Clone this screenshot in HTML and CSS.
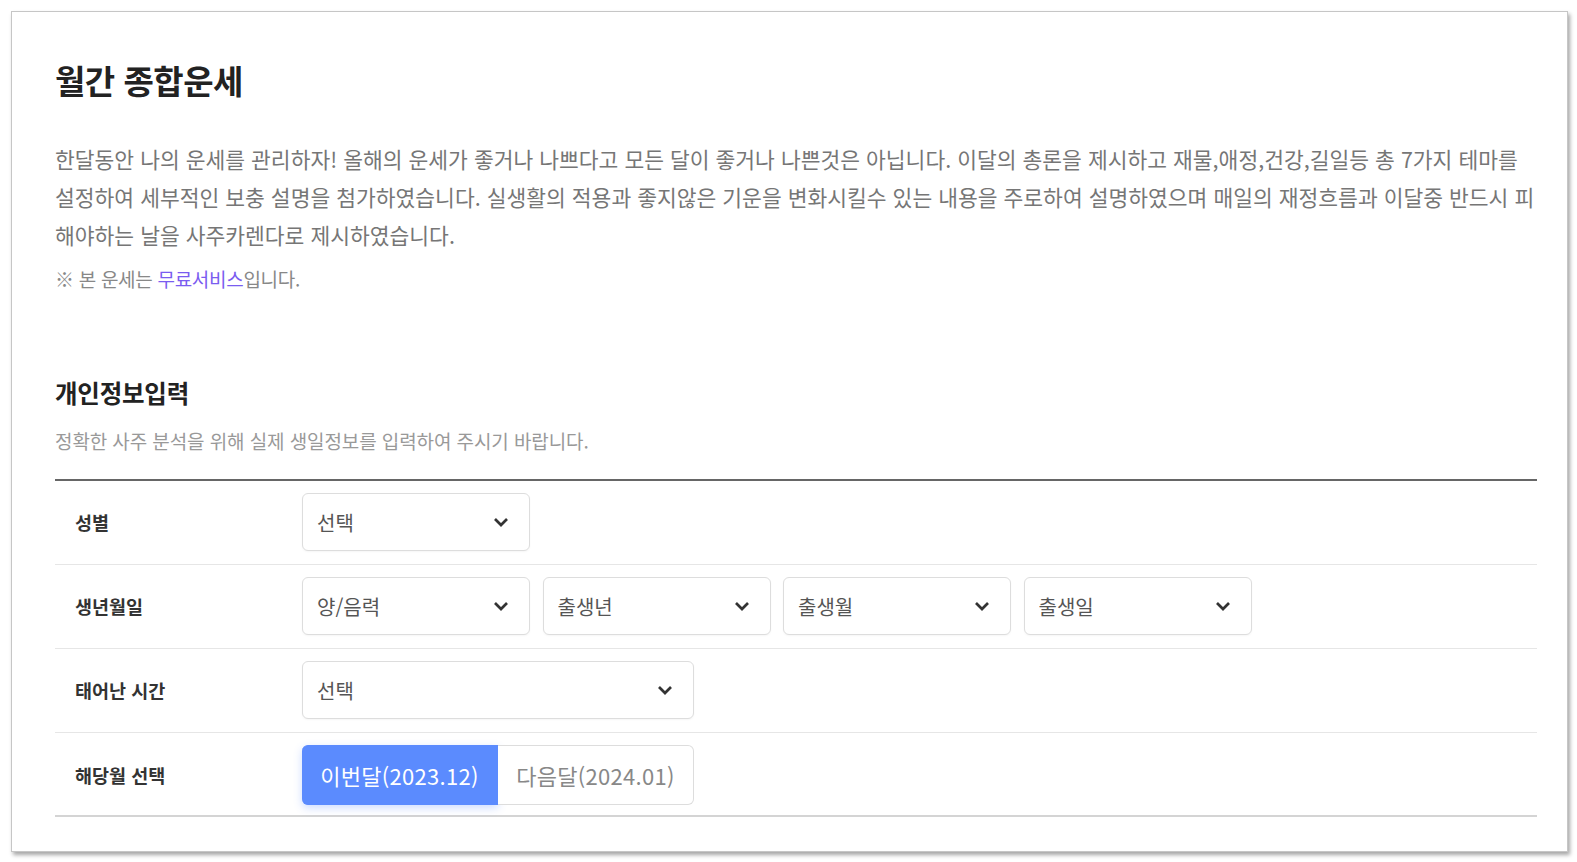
FILE: index.html
```html
<!DOCTYPE html>
<html lang="ko">
<head>
    <meta charset="UTF-8">
    <meta name="viewport" content="width=device-width, initial-scale=1.0">
    <title>월간 종합운세</title>
    <link rel="stylesheet" href="styles.css">
</head>
<body>
    <div class="window">
        <h1 class="title">월간 종합운세</h1>
        <p class="intro">한달동안 나의 운세를 관리하자! 올해의 운세가 좋거나 나쁘다고 모든 달이 좋거나 나쁜것은 아닙니다. 이달의 총론을 제시하고 재물,애정,건강,길일등 총 7가지 테마를<br>설정하여 세부적인 보충 설명을 첨가하였습니다. 실생활의 적용과 좋지않은 기운을 변화시킬수 있는 내용을 주로하여 설명하였으며 매일의 재정흐름과 이달중 반드시 피<br>해야하는 날을 사주카렌다로 제시하였습니다.</p>
        <p class="notice">※ 본 운세는 <span class="free">무료서비스</span>입니다.</p>

        <h2 class="section-title">개인정보입력</h2>
        <p class="section-desc">정확한 사주 분석을 위해 실제 생일정보를 입력하여 주시기 바랍니다.</p>

        <div class="form">
            <div class="form-row">
                <div class="label">성별</div>
                <div class="fields">
                    <div class="select">
                        <select>
                            <option>선택</option>
                            <option>남자</option>
                            <option>여자</option>
                        </select>
                        <svg class="arrow" viewBox="0 0 16 10"><path d="M2 2l6 6 6-6"/></svg>
                    </div>
                </div>
            </div>
            <div class="form-row">
                <div class="label">생년월일</div>
                <div class="fields">
                    <div class="select">
                        <select>
                            <option>양/음력</option>
                            <option>양력</option>
                            <option>음력</option>
                        </select>
                        <svg class="arrow" viewBox="0 0 16 10"><path d="M2 2l6 6 6-6"/></svg>
                    </div>
                    <div class="select">
                        <select>
                            <option>출생년</option>
                        </select>
                        <svg class="arrow" viewBox="0 0 16 10"><path d="M2 2l6 6 6-6"/></svg>
                    </div>
                    <div class="select">
                        <select>
                            <option>출생월</option>
                        </select>
                        <svg class="arrow" viewBox="0 0 16 10"><path d="M2 2l6 6 6-6"/></svg>
                    </div>
                    <div class="select">
                        <select>
                            <option>출생일</option>
                        </select>
                        <svg class="arrow" viewBox="0 0 16 10"><path d="M2 2l6 6 6-6"/></svg>
                    </div>
                </div>
            </div>
            <div class="form-row">
                <div class="label">태어난 시간</div>
                <div class="fields">
                    <div class="select wide">
                        <select>
                            <option>선택</option>
                        </select>
                        <svg class="arrow" viewBox="0 0 16 10"><path d="M2 2l6 6 6-6"/></svg>
                    </div>
                </div>
            </div>
            <div class="form-row last">
                <div class="label">해당월 선택</div>
                <div class="fields">
                    <div class="month-tabs">
                        <button class="month active">이번달(2023.12)</button>
                        <button class="month">다음달(2024.01)</button>
                    </div>
                </div>
            </div>
        </div>
    </div>
</body>
</html>
```

FILE: styles.css
```css
body {
    font-family: 'Noto Sans CJK KR', 'Noto Sans', sans-serif;
    margin: 0;
    padding: 11px 9px 10px 11px;
    background-color: #fff;
    color: #333;
}
.window {
    background-color: #fff;
    border: 1px solid #c6c6c6;
    box-shadow: 2px 3px 4px rgba(0, 0, 0, 0.35);
    padding: 47px 30px 34px 43px;
}
.title {
    font-size: 33px;
    line-height: 42px;
    font-weight: 700;
    color: #222;
    margin: 0;
    letter-spacing: -0.5px;
}
.intro {
    font-size: 21.5px;
    line-height: 38px;
    color: #767676;
    margin: 39px 0 0;
    white-space: nowrap;
}
.notice {
    font-size: 19px;
    line-height: 30px;
    color: #888;
    margin: 10px 0 0;
    letter-spacing: -0.3px;
}
.free {
    color: #7a5cf0;
}
.section-title {
    font-size: 24.5px;
    line-height: 32px;
    font-weight: 700;
    color: #222;
    margin: 83px 0 0;
    letter-spacing: -0.2px;
}
.section-desc {
    font-size: 19px;
    line-height: 28px;
    color: #999;
    margin: 18px 0 0;
    letter-spacing: -0.1px;
}
.form {
    margin-top: 24px;
    border-top: 2px solid #666;
}
.form-row {
    display: flex;
    align-items: center;
    height: 84px;
    box-sizing: border-box;
    border-bottom: 1px solid #e6e6e6;
    padding-bottom: 1px;
}
.form-row.last {
    border-bottom: 2px solid #d4d4d4;
    padding: 1px 0 0;
}
.label {
    width: 247px;
    box-sizing: border-box;
    padding-left: 20px;
    font-size: 18.5px;
    font-weight: 700;
    color: #333;
}
.fields {
    display: flex;
    gap: 12.5px;
}
.select {
    position: relative;
    width: 228px;
}
.select.wide {
    width: 392px;
}
.select select {
    appearance: none;
    -webkit-appearance: none;
    width: 100%;
    height: 58px;
    border: 1px solid #ddd;
    border-radius: 6px;
    background: #fff;
    padding: 0 40px 0 14px;
    font-family: inherit;
    font-size: 20px;
    color: #555;
    box-shadow: 0 1px 2px rgba(0, 0, 0, 0.04);
}
.arrow {
    position: absolute;
    right: 21px;
    top: 24px;
    width: 16px;
    height: 10px;
    fill: none;
    stroke: #333;
    stroke-width: 2.7;
    pointer-events: none;
}
.month-tabs {
    display: flex;
    width: 392px;
    height: 60px;
}
.month {
    flex: 1;
    border: 1px solid #ddd;
    background-color: #fff;
    font-family: inherit;
    font-size: 22px;
    color: #888;
    cursor: pointer;
    padding: 0;
    border-radius: 0 6px 6px 0;
    border-left: none;
    letter-spacing: 0.3px;
}
.month.active {
    background-color: #5b8bfe;
    border-color: #5b8bfe;
    color: #fff;
    border-radius: 6px 0 0 6px;
    box-shadow: 0 3px 8px rgba(91, 139, 254, 0.3);
}
```
